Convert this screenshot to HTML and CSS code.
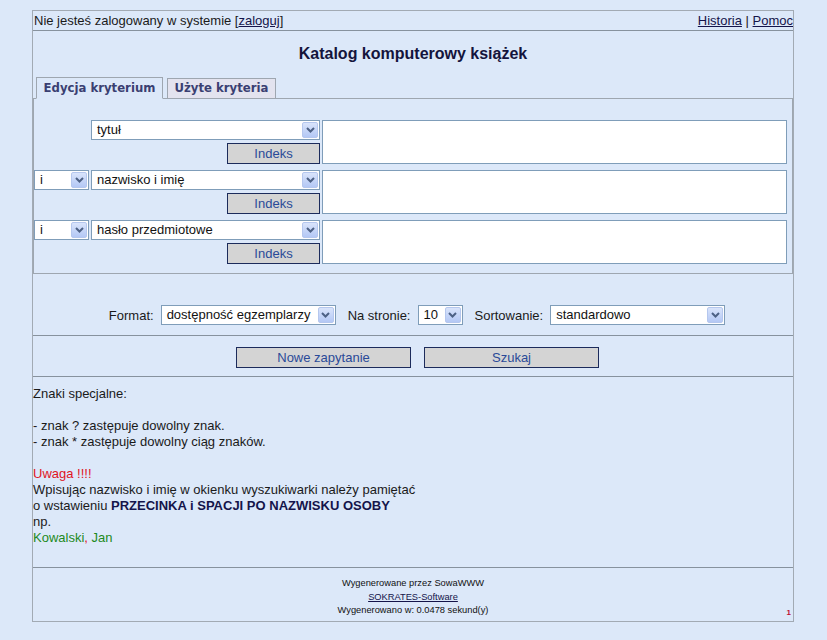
FILE: index.html
```html
<!DOCTYPE html>
<html lang="pl">
<head>
<meta charset="utf-8">
<title>Katalog komputerowy książek</title>
<link rel="stylesheet" href="styles.css">
</head>
<body>
<div class="page">
  <div class="topbar">
    <span>Nie jesteś zalogowany w systemie [<a href="#">zaloguj</a>]</span>
    <span><a href="#">Historia</a> | <a href="#">Pomoc</a></span>
  </div>

  <h1 class="title">Katalog komputerowy książek</h1>

  <div class="tabs">
    <div class="tab active">Edycja kryterium</div>
    <div class="tab">Użyte kryteria</div>
  </div>

  <div class="panel">
    <div class="crit-grid">
      <div class="op"></div>
      <div class="field">
        <div class="select"><span class="val">tytuł</span><span class="arrow"><svg width="9" height="6" viewBox="0 0 9 6"><path d="M1 1 L4.5 4.5 L8 1" fill="none" stroke="#4d6185" stroke-width="2"/></svg></span></div>
        <button class="btn idx" type="button">Indeks</button>
      </div>
      <textarea class="term"></textarea>

      <div class="op">
        <div class="select"><span class="val">i</span><span class="arrow"><svg width="9" height="6" viewBox="0 0 9 6"><path d="M1 1 L4.5 4.5 L8 1" fill="none" stroke="#4d6185" stroke-width="2"/></svg></span></div>
      </div>
      <div class="field">
        <div class="select"><span class="val">nazwisko i imię</span><span class="arrow"><svg width="9" height="6" viewBox="0 0 9 6"><path d="M1 1 L4.5 4.5 L8 1" fill="none" stroke="#4d6185" stroke-width="2"/></svg></span></div>
        <button class="btn idx" type="button">Indeks</button>
      </div>
      <textarea class="term"></textarea>

      <div class="op">
        <div class="select"><span class="val">i</span><span class="arrow"><svg width="9" height="6" viewBox="0 0 9 6"><path d="M1 1 L4.5 4.5 L8 1" fill="none" stroke="#4d6185" stroke-width="2"/></svg></span></div>
      </div>
      <div class="field">
        <div class="select"><span class="val">hasło przedmiotowe</span><span class="arrow"><svg width="9" height="6" viewBox="0 0 9 6"><path d="M1 1 L4.5 4.5 L8 1" fill="none" stroke="#4d6185" stroke-width="2"/></svg></span></div>
        <button class="btn idx" type="button">Indeks</button>
      </div>
      <textarea class="term"></textarea>
    </div>
  </div>

  <div class="options">
    <span class="lbl">Format:</span>
    <div class="select s-format"><span class="val">dostępność egzemplarzy</span><span class="arrow"><svg width="9" height="6" viewBox="0 0 9 6"><path d="M1 1 L4.5 4.5 L8 1" fill="none" stroke="#4d6185" stroke-width="2"/></svg></span></div>
    <span class="lbl">Na stronie:</span>
    <div class="select s-num"><span class="val">10</span><span class="arrow"><svg width="9" height="6" viewBox="0 0 9 6"><path d="M1 1 L4.5 4.5 L8 1" fill="none" stroke="#4d6185" stroke-width="2"/></svg></span></div>
    <span class="lbl">Sortowanie:</span>
    <div class="select s-sort"><span class="val">standardowo</span><span class="arrow"><svg width="9" height="6" viewBox="0 0 9 6"><path d="M1 1 L4.5 4.5 L8 1" fill="none" stroke="#4d6185" stroke-width="2"/></svg></span></div>
  </div>

  <div class="actions">
    <button class="btn big" type="button">Nowe zapytanie</button>
    <button class="btn big" type="button">Szukaj</button>
  </div>

  <div class="notes">
    <p>Znaki specjalne:</p>
    <p class="gap">- znak ? zastępuje dowolny znak.<br>- znak * zastępuje dowolny ciąg znaków.</p>
    <p class="gap"><span class="red">Uwaga !!!!</span><br>Wpisując nazwisko i imię w okienku wyszukiwarki należy pamiętać<br>o wstawieniu <b>PRZECINKA i SPACJI PO NAZWISKU OSOBY</b><br>np.<br><span class="green">Kowalski</span><span class="red">,</span> <span class="green">Jan</span></p>
  </div>

  <div class="footer">
    <div></div>
    <div class="credits">
      Wygenerowane przez SowaWWW<br>
      <a href="#">SOKRATES-Software</a><br>
      Wygenerowano w: 0.0478 sekund(y)
    </div>
    <div class="pagenum">1</div>
  </div>
</div>
</body>
</html>
```

FILE: styles.css
```css
html, body {
  margin: 0;
  padding: 0;
  background: #dce8f9;
}

body {
  font-family: "Liberation Sans", Arial, sans-serif;
  font-size: 13px;
  color: #1a1a1a;
}

a {
  color: #14144a;
  text-decoration: underline;
}

.page {
  margin: 10px 0 0 32px;
  width: 760px;
  border: 1px solid #a2aab4;
  background: #dce8f9;
}

.topbar {
  display: flex;
  justify-content: space-between;
  height: 19px;
  line-height: 19px;
  padding: 0 0 0 1px;
  border-bottom: 1px solid #87929e;
}

.title {
  margin: 0;
  height: 46px;
  padding-top: 13px;
  box-sizing: border-box;
  font-size: 16px;
  line-height: 20px;
  font-weight: bold;
  text-align: center;
  color: #14143c;
}

.tabs {
  display: flex;
  gap: 4px;
  padding-left: 3px;
  margin-bottom: -1px;
  position: relative;
}

.tab {
  box-sizing: border-box;
  height: 22px;
  padding: 0;
  font-family: "DejaVu Sans", Verdana, sans-serif;
  font-weight: bold;
  font-size: 11.7px;
  line-height: 21px;
  text-align: center;
  color: #3a3f72;
  border: 1px solid #9ea6b0;
  background: #e3e3ef;
}

.tab.active {
  width: 127px;
  background: #dce8f9;
  border-bottom-color: #dce8f9;
}

.tab:not(.active) {
  width: 109px;
  margin-top: 1px;
  height: 21px;
  line-height: 19px;
}

.panel {
  border: 1px solid #9ea6b0;
  padding: 21px 0 9px 0;
}

.crit-grid {
  display: grid;
  grid-template-columns: 55px 229px 465px;
  grid-auto-rows: 44px;
  column-gap: 2px;
  row-gap: 6px;
}

.field {
  display: flex;
  flex-direction: column;
  align-items: flex-end;
  gap: 3px;
}

.field .select {
  width: 100%;
}

.select {
  box-sizing: border-box;
  height: 20px;
  display: flex;
  align-items: center;
  background: #fff;
  border: 1px solid #7f9db9;
  color: #111;
}

.select .val {
  flex: 1;
  padding-left: 5px;
  white-space: nowrap;
  overflow: hidden;
  line-height: 18px;
}

.select .arrow {
  box-sizing: border-box;
  width: 16px;
  height: 16px;
  margin-right: 1px;
  display: flex;
  align-items: center;
  justify-content: center;
  border: 1px solid #b5c7ee;
  border-radius: 2px;
  background: linear-gradient(#d9e4fb, #b4c8f5);
}

.term {
  box-sizing: border-box;
  display: block;
  margin: 0;
  width: 465px;
  height: 44px;
  border: 1px solid #7f9db9;
  background: #fff;
  resize: none;
  padding: 0;
}

.btn {
  box-sizing: border-box;
  height: 21px;
  margin: 0;
  padding: 0;
  background: #d4d4d4;
  border: 1px solid #1c2b5b;
  color: #2a4a98;
  font-family: "Liberation Sans", Arial, sans-serif;
  font-size: 13px;
  line-height: 19px;
}

.btn.idx {
  width: 93px;
}

.btn.big {
  width: 175px;
}

.options {
  display: flex;
  justify-content: center;
  align-items: center;
  padding: 31px 0 10px 8px;
  height: 20px;
  border-bottom: 1px solid #87929e;
}

.options .lbl {
  margin-right: 7px;
}

.options .select {
  margin-right: 12px;
}

.options .select:last-child {
  margin-right: 0;
}

.s-format { width: 175px; }
.s-num { width: 45px; }
.s-sort { width: 175px; }

.actions {
  display: flex;
  justify-content: center;
  gap: 13px;
  padding: 11px 0 8px 9px;
  border-bottom: 1px solid #87929e;
}

.notes {
  padding: 9px 0 21px 0;
  line-height: 16px;
}

.notes p {
  margin: 0;
}

.notes p.gap {
  margin-top: 16px;
}

.notes b {
  color: #14144a;
}

.red {
  color: #e0141e;
}

.green {
  color: #1e8a1e;
}

.footer {
  display: grid;
  grid-template-columns: 1fr auto 1fr;
  border-top: 1px solid #87929e;
  padding: 9px 0 3px 0;
}

.credits {
  text-align: center;
  font-size: 9.3px;
  line-height: 13.5px;
  color: #111;
}

.pagenum {
  justify-self: end;
  align-self: end;
  padding-right: 2px;
  font-size: 8px;
  line-height: 10px;
  font-weight: bold;
  color: #c01030;
}
```
